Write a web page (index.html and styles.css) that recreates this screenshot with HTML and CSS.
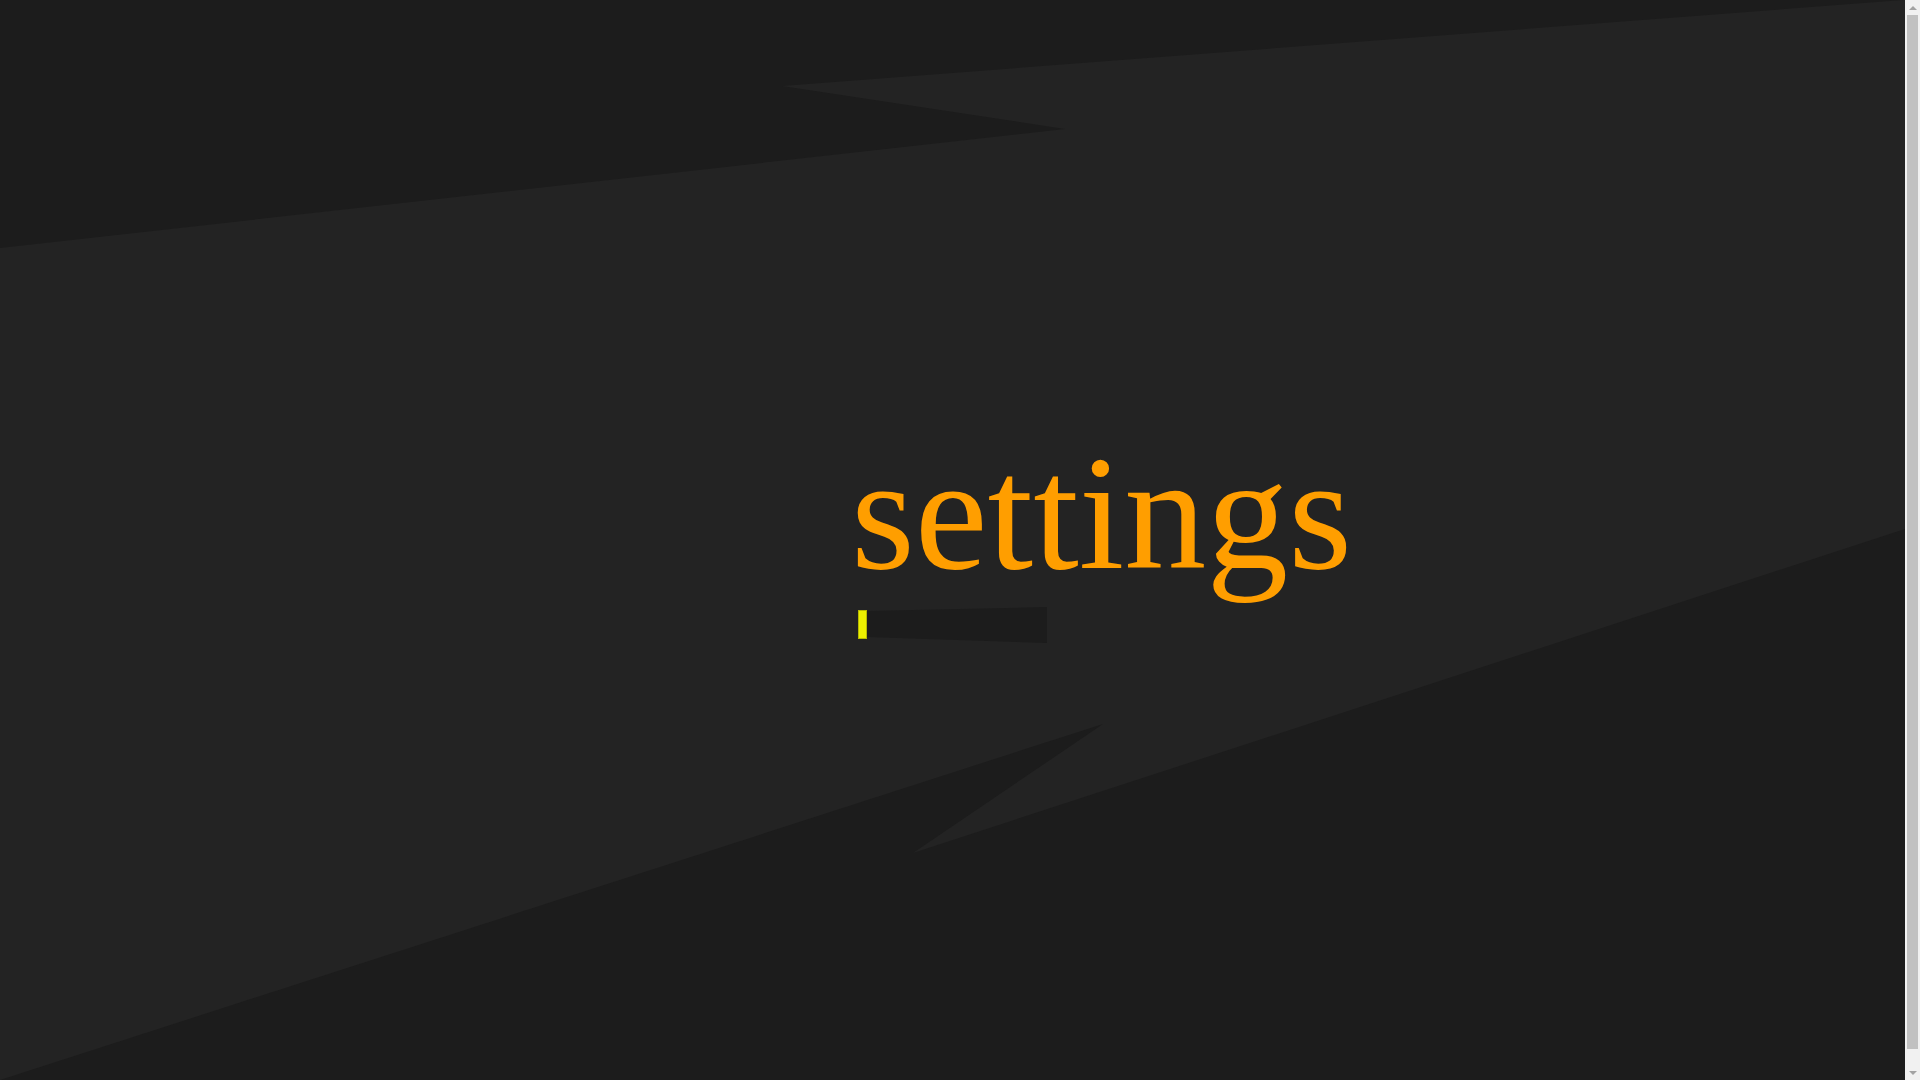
FILE: index.html
```html
<!DOCTYPE html>
<html lang="en">
<head>
<meta charset="utf-8">
<title>settings</title>
<link rel="stylesheet" href="styles.css">
</head>
<body>
<div class="screen">
  <div class="viewport">
    <svg class="backdrop" viewBox="0 0 1905 1080" preserveAspectRatio="none" aria-hidden="true">
      <rect x="0" y="0" width="1905" height="1080" fill="#232323"/>
      <polygon points="0,0 1905,0 1903,0 782,86 1065,129 0,248" fill="#1c1c1c"/>
      <polygon points="0,1080 1103,724 913,853 1905,529 1905,1080" fill="#1c1c1c"/>
    </svg>
    <main class="page">
      <section class="loader">
        <h1 class="title">settings</h1>
        <div class="bar">
          <span class="bar-fill"></span>
          <span class="bar-track"></span>
        </div>
      </section>
    </main>
  </div>
  <div class="scrollbar" aria-hidden="true">
    <span class="sb-btn sb-up"></span>
    <span class="sb-track"><span class="sb-thumb"></span></span>
    <span class="sb-btn sb-down"></span>
  </div>
</div>
</body>
</html>
```

FILE: styles.css
```css
html, body {
  margin: 0;
  padding: 0;
  background: #1c1c1c;
  overflow: hidden;
}
body {
  font-family: "Liberation Serif", "Times New Roman", serif;
}
.screen {
  display: flex;
  width: 100vw;
  height: 100vh;
}
.viewport {
  position: relative;
  flex: 1;
  height: 100%;
  overflow: hidden;
}
.backdrop {
  position: absolute;
  left: 0;
  top: 0;
  width: 100%;
  height: 100%;
  display: block;
}
.page {
  position: relative;
  box-sizing: border-box;
  padding-top: 431px;
  padding-left: 851px;
}
.loader {
  display: flex;
  flex-direction: column;
  align-items: flex-start;
}
.title {
  margin: 0;
  font-family: "Liberation Serif", "Times New Roman", serif;
  font-weight: normal;
  font-size: 164px;
  line-height: 164px;
  color: #ff9e00;
}
.bar {
  display: flex;
  align-items: flex-start;
  margin-top: 12px;
  margin-left: 7px;
}
.bar-fill {
  width: 9px;
  height: 29px;
  margin-top: 3px;
  background: #ecf000;
  box-shadow: inset 0 0 0 1px #b8bb00;
}
.bar-track {
  width: 180px;
  height: 36px;
  background: #1c1c1c;
  clip-path: polygon(0 4px, 100% 0, 100% 100%, 0 30px);
}
.scrollbar {
  width: 15px;
  height: 100%;
  background: #f1f1f1;
  display: flex;
  flex-direction: column;
}
.sb-btn {
  height: 15px;
  flex: none;
  display: flex;
  align-items: center;
  justify-content: center;
}
.sb-btn::before {
  content: "";
  width: 0;
  height: 0;
  border-left: 4px solid transparent;
  border-right: 4px solid transparent;
}
.sb-up::before {
  border-bottom: 4px solid #a3a3a3;
}
.sb-down::before {
  border-top: 4px solid #a3a3a3;
}
.sb-track {
  flex: 1;
  display: flex;
  flex-direction: column;
  padding: 0 2px;
}
.sb-thumb {
  height: 1034px;
  background: #c1c1c1;
}
```
